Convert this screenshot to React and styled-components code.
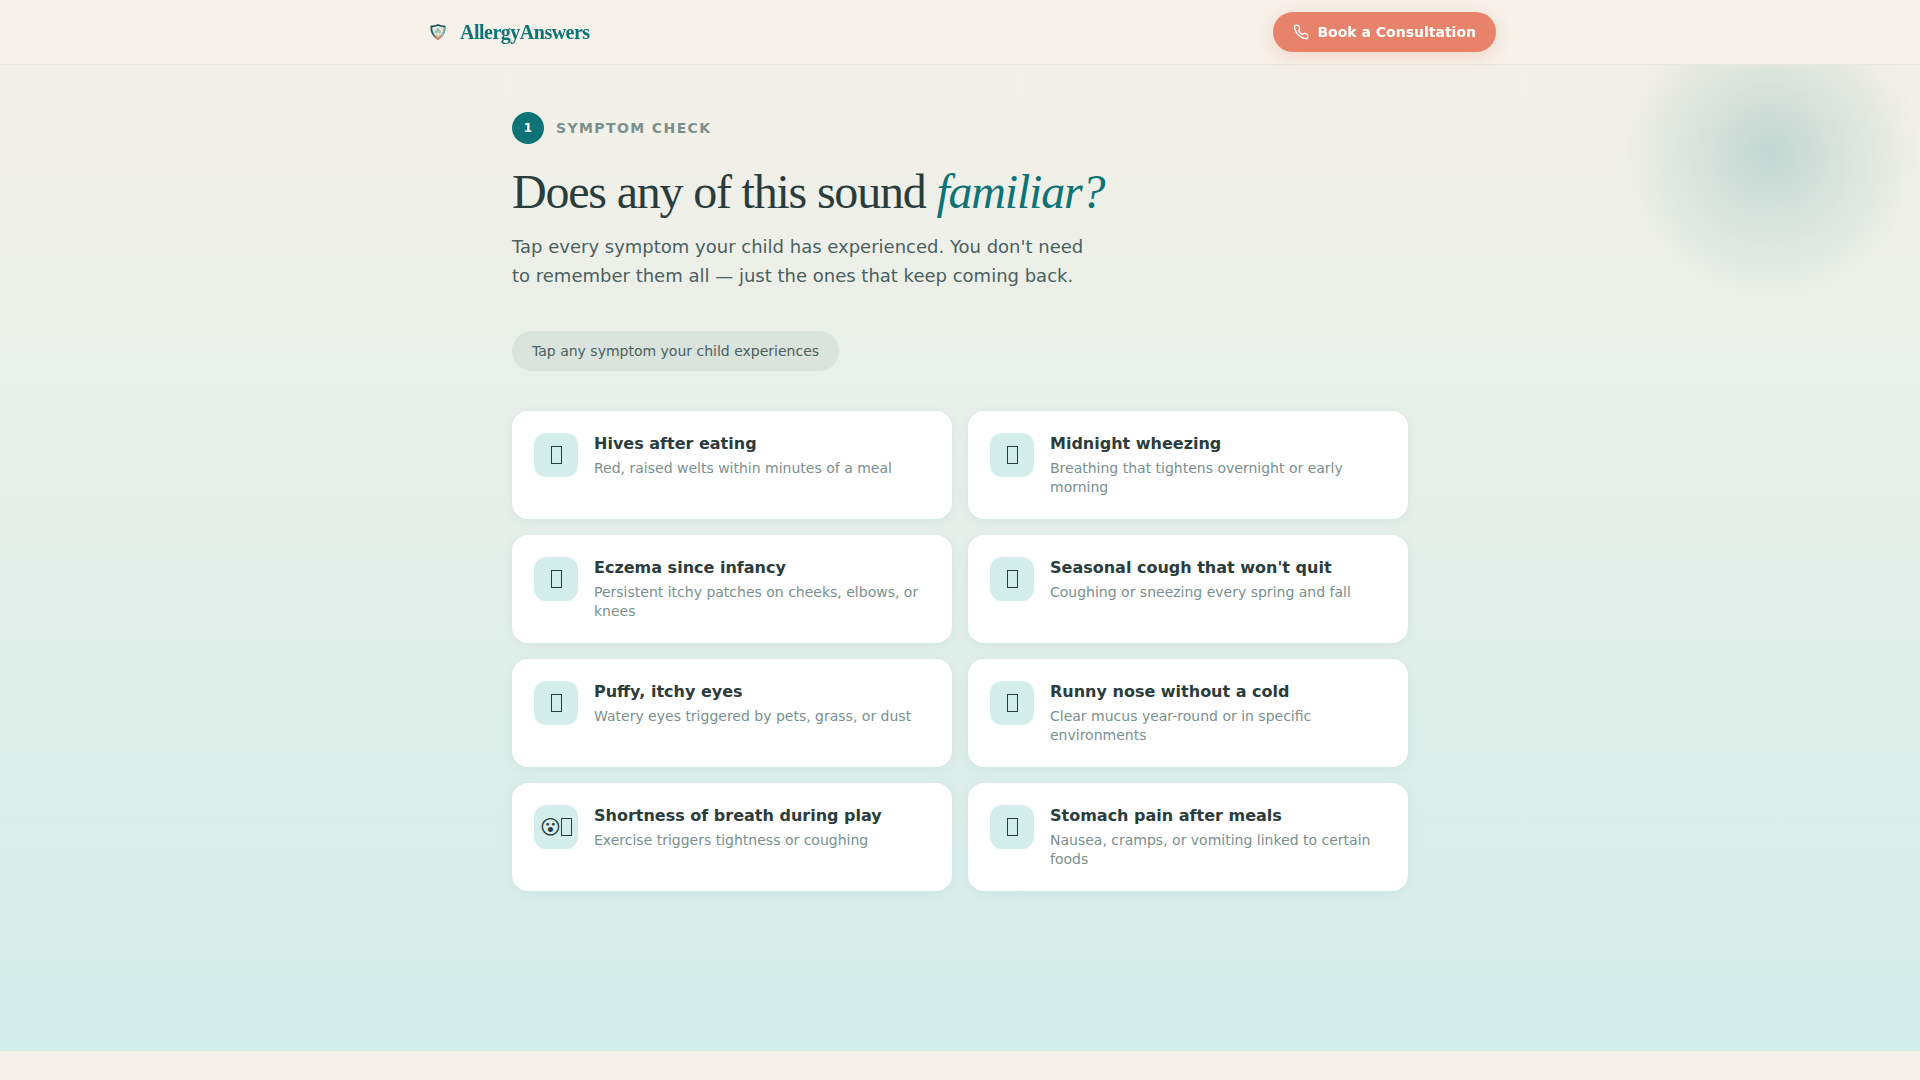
import styled, { createGlobalStyle } from "styled-components";
import { useState } from "react";
import { FiPhone } from "react-icons/fi";

const symptoms = [
    {title:"Hives after eating", text:"Red, raised welts within minutes of a meal"},
    {title:"Midnight wheezing", text:"Breathing that tightens overnight or early morning"},
    {title:"Eczema since infancy", text:"Persistent itchy patches on cheeks, elbows, or knees"},
    {title:"Seasonal cough that won't quit", text:"Coughing or sneezing every spring and fall"},
    {title:"Puffy, itchy eyes", text:"Watery eyes triggered by pets, grass, or dust"},
    {title:"Runny nose without a cold", text:"Clear mucus year-round or in specific environments"},
    {face:"😮\uFE0E", title:"Shortness of breath during play", text:"Exercise triggers tightness or coughing"},
    {title:"Stomach pain after meals", text:"Nausea, cramps, or vomiting linked to certain foods"},
];

const Logo = () => (
    <svg width="28" height="28" viewBox="0 0 28 28" fill="none" aria-hidden="true">
        <defs>
            <linearGradient id="shield" x1="9" y1="7" x2="15" y2="22" gradientUnits="userSpaceOnUse">
                <stop stopColor="#174f58" />
                <stop offset="0.6" stopColor="#2f7470" />
                <stop offset="1" stopColor="#e8836b" />
            </linearGradient>
        </defs>
        <path d="M14 7c2 1 4.200 1.400 6.700 1.500.3 5.500-1.700 9.500-6.700 12.700-5-3.200-7-7.200-6.700-12.700 2.500-.1 4.700-.5 6.700-1.500z" fill="#e6e5d9" stroke="url(#shield)" strokeWidth="1.800" strokeLinejoin="round" />
        <path d="M20.300 9.200c.2 3.800-.9 6.800-3.200 9.300" stroke="#7fc0ac" strokeWidth="1.600" />
        <circle cx="14" cy="11.800" r="1.500" fill="#8fb8a8" />
        <circle cx="12.300" cy="14" r="1.400" fill="#8fb8a8" />
        <circle cx="15.700" cy="14" r="1.400" fill="#a9bfae" />
        <path d="M10.500 17c2.300.8 4.700.8 7 0l-3.500 3.800z" fill="#eba796" />
    </svg>
);

const App = () => {
    const [picked, setPicked] = useState([]);

    const toggle = (title) => {
        setPicked(picked.includes(title) ? picked.filter((t) => t !== title) : [...picked, title]);
    };

    return (
        <>
            <GlobalStyle />
            <Header>
                <Nav>
                    <Brand href="#">
                        <Logo />
                        <span>AllergyAnswers</span>
                    </Brand>
                    <BookButton type="button">
                        <FiPhone size={16} />
                        Book a Consultation
                    </BookButton>
                </Nav>
            </Header>
            <main>
                <Section>
                    <Glow />
                    <Content>
                        <Step>
                            <StepNumber>1</StepNumber>
                            <StepLabel>Symptom check</StepLabel>
                        </Step>
                        <Title>Does any of this sound <em>familiar?</em></Title>
                        <Lead>
                            Tap every symptom your child has experienced. You don't need to
                            remember them all — just the ones that keep coming back.
                        </Lead>
                        <Hint>Tap any symptom your child experiences</Hint>
                        <Grid>
                            {symptoms.map((item) => (
                                <Card
                                    key={item.title}
                                    type="button"
                                    $active={picked.includes(item.title)}
                                    aria-pressed={picked.includes(item.title)}
                                    onClick={() => toggle(item.title)}
                                >
                                    <CardIcon aria-hidden="true">
                                        {item.face && <span>{item.face}</span>}
                                        <Box />
                                    </CardIcon>
                                    <CardBody>
                                        <CardTitle>{item.title}</CardTitle>
                                        <CardText>{item.text}</CardText>
                                    </CardBody>
                                </Card>
                            ))}
                        </Grid>
                    </Content>
                </Section>
            </main>
        </>
    );
};

export default App;

const GlobalStyle = createGlobalStyle`
    *{
        box-sizing: border-box;
    }
    html{
        background: #f5f0e8;
    }
    body{
        margin: 0;
        min-height: 100vh;
        color: #2a3c3c;
        font-family: "DejaVu Sans", sans-serif;
        font-size: 16px;
    }
`

const Header = styled.header`
    position: fixed;
    top: 0;
    left: 0;
    right: 0;
    z-index: 10;
    background: #f6f1e9;
    border-bottom: 1px solid #e8e7df;
`

const Nav = styled.nav`
    display: flex;
    align-items: center;
    justify-content: space-between;
    max-width: 1120px;
    height: 64px;
    margin: 0 auto;
    padding: 0 24px;
`

const Brand = styled.a`
    display: flex;
    align-items: center;
    gap: 8px;
    color: #0d7377;
    font-family: "Liberation Serif", serif;
    font-size: 20px;
    font-weight: 700;
    letter-spacing: -0.025em;
    text-decoration: none;
`

const BookButton = styled.button`
    display: flex;
    align-items: center;
    gap: 8px;
    height: 40px;
    padding: 0 20px;
    border: none;
    border-radius: 20px;
    background: #e8836b;
    color: #fff;
    font-family: inherit;
    font-size: 14px;
    font-weight: 600;
    box-shadow: 0 4px 16px rgba(232,131,107,0.25);
    cursor: pointer;
`

const Section = styled.section`
    position: relative;
    overflow: hidden;
    padding: 112px 24px 160px;
    background: linear-gradient(180deg, #f5f0e8 0%, #d4eeeb 100%);
`

const Glow = styled.div`
    position: absolute;
    top: -50px;
    right: -50px;
    width: 400px;
    height: 400px;
    background: radial-gradient(circle closest-side, rgba(13,115,119,0.2), rgba(13,115,119,0) 75%);
    pointer-events: none;
`

const Content = styled.div`
    position: relative;
    max-width: 896px;
    margin: 0 auto;
`

const Step = styled.div`
    display: flex;
    align-items: center;
    gap: 12px;
`

const StepNumber = styled.span`
    display: flex;
    align-items: center;
    justify-content: center;
    width: 32px;
    height: 32px;
    border-radius: 50%;
    background: #0d7377;
    color: #fff;
    font-size: 12px;
    font-weight: 700;
`

const StepLabel = styled.span`
    color: #7a908e;
    font-size: 14px;
    font-weight: 600;
    letter-spacing: 0.1em;
    text-transform: uppercase;
`

const Title = styled.h1`
    margin: 20px 0 12px;
    font-family: "Liberation Serif", serif;
    font-size: 48px;
    font-weight: 400;
    line-height: 56px;
    letter-spacing: -0.025em;
    em{
        color: #0d7377;
    }
`

const Lead = styled.p`
    max-width: 580px;
    margin: 0 0 41px;
    color: #4a6060;
    font-size: 18px;
    line-height: 29px;
`

const Hint = styled.p`
    width: fit-content;
    margin: 0 0 40px;
    padding: 10px 20px;
    border-radius: 20px;
    background: #dae3dc;
    color: #4a6060;
    font-size: 14px;
    line-height: 20px;
`

const Grid = styled.div`
    display: grid;
    grid-template-columns: repeat(2, 1fr);
    gap: 16px;
    @media (max-width: 700px){
        grid-template-columns: 1fr;
    }
`

const Card = styled.button`
    display: flex;
    align-items: flex-start;
    gap: 16px;
    padding: 20px;
    border: 2px solid ${({ $active }) => ($active ? "#0d7377" : "#fff")};
    border-radius: 16px;
    background: #fff;
    color: inherit;
    font-family: inherit;
    text-align: left;
    box-shadow: 0 2px 12px rgba(13,115,119,0.07);
    cursor: pointer;
`

const CardIcon = styled.span`
    display: flex;
    align-items: center;
    justify-content: center;
    flex-shrink: 0;
    width: 44px;
    height: 44px;
    border-radius: 12px;
    background: #d4eeeb;
    font-size: 20px;
    line-height: 24px;
`

const Box = styled.span`
    width: 11px;
    height: 18px;
    border: 1px solid #2a3c3c;
`

const CardBody = styled.span`
    display: flex;
    flex-direction: column;
    gap: 4px;
`

const CardTitle = styled.span`
    font-size: 16px;
    font-weight: 600;
    line-height: 22px;
`

const CardText = styled.span`
    color: #7a908e;
    font-size: 14px;
    line-height: 19px;
`
